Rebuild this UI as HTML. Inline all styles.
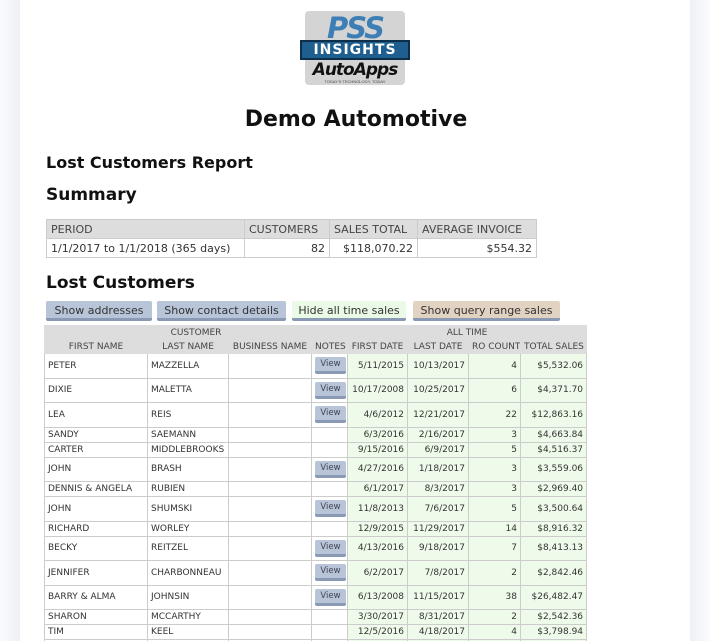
<!DOCTYPE html>
<html><head><meta charset="utf-8"><style>
*{margin:0;padding:0;box-sizing:border-box}
html,body{width:710px;height:641px;overflow:hidden}
body{background:#fff;font-family:"DejaVu Sans","Liberation Sans",sans-serif;color:#222;position:relative}
.shl{position:absolute;left:0;top:0;width:20px;height:641px;background:linear-gradient(to right,#fafbfd,#eef0f4)}
.shr{position:absolute;right:0;top:0;width:20px;height:641px;background:linear-gradient(to left,#fafbfd,#eef0f4)}
.abs{position:absolute}
h1{position:absolute;left:0;width:712px;text-align:center;top:107px;font-size:22px;font-weight:bold;color:#111}
.h2{position:absolute;left:46px;font-weight:bold;color:#111}
table{border-collapse:collapse;position:absolute}
.sum{left:46px;top:219px;font-size:11px;width:491px}
.sum td{border:1px solid #ccc;height:19px;padding:0 4px;color:#333}
.sum tr:first-child td{background:#ddd;color:#444}
.btn{position:absolute;top:301px;height:20px;font-size:11px;line-height:19px;text-align:center;border-bottom:3px solid #8a9ab4;color:#333;border-radius:2px}
.lc{left:44px;top:325px;font-size:9px;color:#333;table-layout:fixed}
.lc td{border:1px solid #ccc;padding:0 3px;white-space:nowrap;overflow:hidden}
.lc .hd td{background:#ddd;text-align:center;color:#444;height:14px;border-color:#ddd}
.lc .g{background:#effbea;text-align:right}
.v{display:inline-block;width:31px;height:17px;background:#b8c4d8;border-bottom:3px solid #8a9ab4;border-radius:2px;font-size:8.5px;line-height:14px;text-align:center;color:#445}
.t{height:24.5px}.s{height:15px}
</style></head><body>
<div class="shl"></div><div class="shr"></div>
<div class="abs" style="left:305px;top:11px;width:100px;height:74px;background:#d4d4d4;border-radius:4px">
 <div class="abs" style="left:6px;top:0px;width:88px;text-align:center;font:italic bold 29px 'DejaVu Sans',sans-serif;color:#3d7fb5;letter-spacing:-2px">PSS</div>
 <div class="abs" style="left:-5px;top:29px;width:110px;height:20px;background:#1f5f8f;border:2px solid #0d2f4a;color:#fff;font:bold 14px 'DejaVu Sans',sans-serif;text-align:center;line-height:16px;letter-spacing:1px">INSIGHTS</div>
 <div class="abs" style="left:0;top:49px;width:100px;text-align:center;font:italic bold 17px 'DejaVu Sans',sans-serif;color:#111;letter-spacing:-1px">AutoApps</div>
 <div class="abs" style="left:0;top:68px;width:100px;text-align:center;font:4px sans-serif;color:#444">TODAY'S TECHNOLOGY, TODAY</div>
</div>
<h1>Demo Automotive</h1>
<div class="h2" style="top:153px;font-size:16px">Lost Customers Report</div>
<div class="h2" style="top:185px;font-size:17px">Summary</div>
<table class="sum">
<tr><td style="width:198px">PERIOD</td><td style="width:85px">CUSTOMERS</td><td style="width:88px">SALES TOTAL</td><td>AVERAGE INVOICE</td></tr>
<tr><td>1/1/2017 to 1/1/2018 (365 days)</td><td style="text-align:right">82</td><td style="text-align:right">$118,070.22</td><td style="text-align:right">$554.32</td></tr>
</table>
<div class="h2" style="top:273px;font-size:17px">Lost Customers</div>
<div class="btn" style="left:46px;width:106px;background:#b8c4d8">Show addresses</div>
<div class="btn" style="left:157px;width:129px;background:#b8c4d8">Show contact details</div>
<div class="btn" style="left:292px;width:114px;background:#eafae6">Hide all time sales</div>
<div class="btn" style="left:413px;width:147px;background:#e2d2c2">Show query range sales</div>
<table class="lc" style="width:542px">
<colgroup><col style="width:103px"><col style="width:81px"><col style="width:83px"><col style="width:36px"><col style="width:60px"><col style="width:61px"><col style="width:52px"><col style="width:66px"></colgroup>
<tr class="hd"><td colspan="4">CUSTOMER</td><td colspan="4">ALL TIME</td></tr>
<tr class="hd"><td>FIRST NAME</td><td>LAST NAME</td><td>BUSINESS NAME</td><td>NOTES</td><td>FIRST DATE</td><td>LAST DATE</td><td>RO COUNT</td><td>TOTAL SALES</td></tr>
<tr class="t"><td>PETER</td><td>MAZZELLA</td><td></td><td><span class="v">View</span></td><td class="g">5/11/2015</td><td class="g">10/13/2017</td><td class="g">4</td><td class="g">$5,532.06</td></tr>
<tr class="t"><td>DIXIE</td><td>MALETTA</td><td></td><td><span class="v">View</span></td><td class="g">10/17/2008</td><td class="g">10/25/2017</td><td class="g">6</td><td class="g">$4,371.70</td></tr>
<tr class="t"><td>LEA</td><td>REIS</td><td></td><td><span class="v">View</span></td><td class="g">4/6/2012</td><td class="g">12/21/2017</td><td class="g">22</td><td class="g">$12,863.16</td></tr>
<tr class="s"><td>SANDY</td><td>SAEMANN</td><td></td><td></td><td class="g">6/3/2016</td><td class="g">2/16/2017</td><td class="g">3</td><td class="g">$4,663.84</td></tr>
<tr class="s"><td>CARTER</td><td>MIDDLEBROOKS</td><td></td><td></td><td class="g">9/15/2016</td><td class="g">6/9/2017</td><td class="g">5</td><td class="g">$4,516.37</td></tr>
<tr class="t"><td>JOHN</td><td>BRASH</td><td></td><td><span class="v">View</span></td><td class="g">4/27/2016</td><td class="g">1/18/2017</td><td class="g">3</td><td class="g">$3,559.06</td></tr>
<tr class="s"><td>DENNIS &amp; ANGELA</td><td>RUBIEN</td><td></td><td></td><td class="g">6/1/2017</td><td class="g">8/3/2017</td><td class="g">3</td><td class="g">$2,969.40</td></tr>
<tr class="t"><td>JOHN</td><td>SHUMSKI</td><td></td><td><span class="v">View</span></td><td class="g">11/8/2013</td><td class="g">7/6/2017</td><td class="g">5</td><td class="g">$3,500.64</td></tr>
<tr class="s"><td>RICHARD</td><td>WORLEY</td><td></td><td></td><td class="g">12/9/2015</td><td class="g">11/29/2017</td><td class="g">14</td><td class="g">$8,916.32</td></tr>
<tr class="t"><td>BECKY</td><td>REITZEL</td><td></td><td><span class="v">View</span></td><td class="g">4/13/2016</td><td class="g">9/18/2017</td><td class="g">7</td><td class="g">$8,413.13</td></tr>
<tr class="t"><td>JENNIFER</td><td>CHARBONNEAU</td><td></td><td><span class="v">View</span></td><td class="g">6/2/2017</td><td class="g">7/8/2017</td><td class="g">2</td><td class="g">$2,842.46</td></tr>
<tr class="t"><td>BARRY &amp; ALMA</td><td>JOHNSIN</td><td></td><td><span class="v">View</span></td><td class="g">6/13/2008</td><td class="g">11/15/2017</td><td class="g">38</td><td class="g">$26,482.47</td></tr>
<tr class="s"><td>SHARON</td><td>MCCARTHY</td><td></td><td></td><td class="g">3/30/2017</td><td class="g">8/31/2017</td><td class="g">2</td><td class="g">$2,542.36</td></tr>
<tr class="s"><td>TIM</td><td>KEEL</td><td></td><td></td><td class="g">12/5/2016</td><td class="g">4/18/2017</td><td class="g">4</td><td class="g">$3,798.94</td></tr>
<tr class="t"><td></td><td></td><td></td><td><span class="v">View</span></td><td class="g"></td><td class="g"></td><td class="g"></td><td class="g"></td></tr>
</table>
</body></html>
